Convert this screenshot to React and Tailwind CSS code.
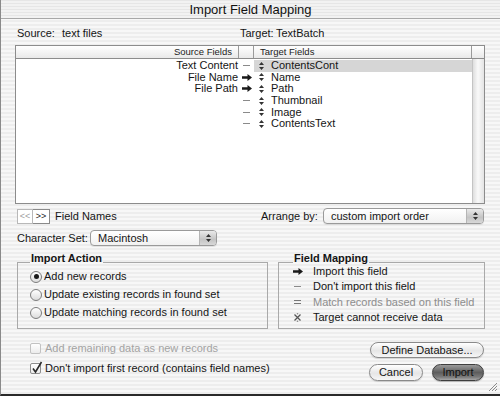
import React from "react";

const UpDown = ({ c = "#222" }) => (
  <svg width="5" height="8" viewBox="0 0 5 8">
    <path d="M2.5 0L5 3H0z M2.5 8L0 5h5z" fill={c} />
  </svg>
);

const Arrow = () => (
  <svg width="10" height="7" viewBox="0 0 10 7">
    <path d="M0 2.3h5.5V0L10 3.5 5.5 7V4.7H0z" fill="#1a1a1a" />
  </svg>
);

const Dash = () => <span className="block w-[7px] h-px bg-[#8a8a8a]" />;

const rows = [
  { s: "Text Content", m: "dash", t: "ContentsCont", sel: true },
  { s: "File Name", m: "arrow", t: "Name" },
  { s: "File Path", m: "arrow", t: "Path" },
  { s: "", m: "dash", t: "Thumbnail" },
  { s: "", m: "dash", t: "Image" },
  { s: "", m: "dash", t: "ContentsText" },
];

function Popup({ label, w }) {
  return (
    <div
      className={`${w} h-[16px] flex rounded-[4px] border border-[#9a9a9a] bg-[linear-gradient(to_bottom,#ffffff,#f1f1f1)] shadow-[0_1px_0_rgba(0,0,0,0.08)]`}
    >
      <div className="flex-1 flex items-center pl-[7px]">{label}</div>
      <div className="w-[17px] flex items-center justify-center rounded-r-[3px] border-l border-[#b5b5b5] bg-[linear-gradient(to_bottom,#e9e9e9,#c4c4c4_60%,#d8d8d8)]">
        <UpDown c="#333" />
      </div>
    </div>
  );
}

function Radio({ on, label }) {
  return (
    <div className="h-[15px] flex items-center">
      <span className="w-[12px] h-[12px] rounded-full border border-[#7d7d7d] bg-[linear-gradient(to_bottom,#ffffff,#dcdcdc)] flex items-center justify-center">
        {on && <span className="w-[5px] h-[5px] rounded-full bg-[#1a1a1a]" />}
      </span>
      <span className="ml-[2px]">{label}</span>
    </div>
  );
}

function Check({ on, disabled, label }) {
  return (
    <div className="h-[14px] flex items-center">
      <span
        className={`relative w-[11px] h-[11px] rounded-[2px] border bg-[linear-gradient(to_bottom,#ffffff,#ececec)] ${
          disabled ? "border-[#c2c2c2]" : "border-[#8d8d8d]"
        }`}
      >
        {on && (
          <svg
            className="absolute left-[1px] -top-[3px]"
            width="11"
            height="13"
            viewBox="0 0 11 13"
          >
            <path
              d="M1 7.5l2.5 3.5L9.5 1"
              fill="none"
              stroke="#2a2a2a"
              strokeWidth="1.6"
            />
          </svg>
        )}
      </span>
      <span className={`ml-[4px] ${disabled ? "text-[#a3a3a3]" : ""}`}>
        {label}
      </span>
    </div>
  );
}

const stripe =
  "bg-[repeating-linear-gradient(to_bottom,#ededed_0px,#ededed_2px,#f7f7f7_2px,#f7f7f7_4px)]";

export default function App() {
  return (
    <div
      className={`w-[500px] h-[396px] overflow-hidden relative flex flex-col border-l border-[#8a8a8a] border-b-2 border-b-[#2a2a2a] ${stripe} font-['Liberation_Sans',Arial,sans-serif] text-[11px] text-[#151515] leading-none`}
    >
      {/* title bar */}
      <div className="h-[19px] shrink-0 flex items-center justify-center border-b border-[#a8a8a8] text-[13px] text-[#111] bg-[repeating-linear-gradient(to_bottom,#e6e6e6_0px,#e6e6e6_1px,#f2f2f2_1px,#f2f2f2_3px)]">
        Import Field Mapping
      </div>

      <div className="pl-[14px] pr-[14px] flex flex-col">
        {/* source / target */}
        <div className="mt-[7px] h-[14px] flex items-center">
          <span className="ml-[2px] w-[45px]">Source:</span>
          <span className="w-[178px]">text files</span>
          <span className="w-[36px]">Target:</span>
          <span>TextBatch</span>
        </div>

        {/* table */}
        <div className="mt-[5px] w-[470px] h-[159px] border border-[#8c8c8c] flex flex-col bg-white">
          <div className="h-[13px] shrink-0 flex border-b border-[#8c8c8c] text-[9.5px] text-[#222] bg-[linear-gradient(to_bottom,#ffffff,#e9e9e9)]">
            <div className="w-[223px] flex items-center justify-end pr-[6px] border-r border-[#9a9a9a]">
              Source Fields
            </div>
            <div className="w-[15px] border-r border-[#9a9a9a]" />
            <div className="w-[218px] flex items-center pl-[6px] border-r border-[#9a9a9a]">
              Target Fields
            </div>
            <div className="w-[12px]" />
          </div>
          <div className="flex-1 flex">
            <div className="w-[456px] flex flex-col pt-[1px]">
              {rows.map((r, i) => (
                <div key={i} className="h-[11.6px] flex items-center">
                  <div className="w-[223px] text-right pr-[1px]">{r.s}</div>
                  <div className="w-[15px] flex items-center justify-center">
                    {r.m === "arrow" ? <Arrow /> : <Dash />}
                  </div>
                  <div
                    className={`w-[218px] h-full flex items-center pl-[5px] ${
                      r.sel ? "bg-[#d6d6d6]" : ""
                    }`}
                  >
                    <UpDown c="#333" />
                    <span className="ml-[7px]">{r.t}</span>
                  </div>
                </div>
              ))}
            </div>
            <div className="w-[12px] border-l border-[#c4c4c4] bg-[linear-gradient(to_right,#dedede,#f9f9f9_45%,#e4e4e4)]" />
          </div>
        </div>

        {/* nav + arrange */}
        <div className="mt-[4px] h-[16px] flex items-center">
          <div className="ml-[2px] flex">
            <span className="w-[16px] h-[15px] flex items-center justify-center border border-[#b8b8b8] bg-white text-[9px] text-[#a0a0a0]">
              &lt;&lt;
            </span>
            <span className="w-[17px] h-[15px] flex items-center justify-center border border-l-0 border-[#8a8a8a] bg-white text-[9px] text-[#222]">
              &gt;&gt;
            </span>
          </div>
          <span className="ml-[5px]">Field Names</span>
          <div className="ml-auto w-[225px] flex items-center">
            <span className="w-[62px]">Arrange by:</span>
            <Popup label="custom import order" w="w-[161px]" />
          </div>
        </div>

        {/* character set */}
        <div className="mt-[6px] h-[16px] ml-[2px] flex items-center">
          <span className="w-[73px]">Character Set:</span>
          <Popup label="Macintosh" w="w-[127px]" />
        </div>

        {/* groups */}
        <div className="mt-[6px] flex">
          <fieldset className="ml-[2px] w-[251px] h-[77px] border border-[#a9a9a9] px-[12px]">
            <legend className="font-bold leading-[12px] pb-[8px] px-[1px]">
              Import Action
            </legend>
            <div className="-mt-[3px] flex flex-col gap-[3px]">
              <Radio on label="Add new records" />
              <Radio label="Update existing records in found set" />
              <Radio label="Update matching records in found set" />
            </div>
          </fieldset>
          <fieldset className="ml-[10px] w-[207px] h-[77px] border border-[#a9a9a9] pl-[14px]">
            <legend className="font-bold leading-[12px] pb-[8px] px-[1px]">
              Field Mapping
            </legend>
            <div className="-mt-[8px] flex flex-col">
              <div className="h-[15.3px] flex items-center">
                <span className="w-[20px] flex items-center">
                  <Arrow />
                </span>
                <span>Import this field</span>
              </div>
              <div className="h-[15.3px] flex items-center">
                <span className="w-[20px] flex items-center pl-[1px]">
                  <Dash />
                </span>
                <span>Don't import this field</span>
              </div>
              <div className="h-[15.3px] flex items-center text-[#8e8e8e]">
                <span className="w-[20px] flex flex-col gap-[2px] pl-[1px]">
                  <span className="block w-[7px] h-px bg-[#777]" />
                  <span className="block w-[7px] h-px bg-[#777]" />
                </span>
                <span>Match records based on this field</span>
              </div>
              <div className="h-[15.3px] flex items-center">
                <span className="w-[20px] flex items-center">
                  <svg width="9" height="9" viewBox="0 0 9 9">
                    <path
                      d="M1.5 1.5l6 6M7.5 1.5l-6 6"
                      stroke="#555"
                      strokeWidth="1.3"
                    />
                    <circle cx="4.5" cy="0.8" r="0.8" fill="#888" />
                    <circle cx="4.5" cy="8.2" r="0.8" fill="#888" />
                  </svg>
                </span>
                <span>Target cannot receive data</span>
              </div>
            </div>
          </fieldset>
        </div>

        {/* bottom */}
        <div className="flex items-start">
          <div className="ml-[15px] pt-[12px] flex flex-col gap-[6px]">
            <Check disabled label="Add remaining data as new records" />
            <Check on label="Don't import first record (contains field names)" />
          </div>
          <div className="ml-auto mr-[2px] pt-[13px] flex flex-col items-end">
            <div className="w-[114px] h-[16px] rounded-full border border-[#8a8a8a] bg-[linear-gradient(to_bottom,#ffffff,#e6e6e6_55%,#f6f6f6)] flex items-center justify-center shadow-[0_1px_1px_rgba(0,0,0,0.15)]">
              Define Database...
            </div>
            <div className="mt-[6px] flex">
              <div className="w-[54px] h-[17px] rounded-full border border-[#8a8a8a] bg-[linear-gradient(to_bottom,#ffffff,#e6e6e6_55%,#f6f6f6)] flex items-center justify-center shadow-[0_1px_1px_rgba(0,0,0,0.15)]">
                Cancel
              </div>
              <div className="ml-[9px] w-[52px] h-[17px] rounded-full border border-[#3e3e3e] bg-[linear-gradient(to_bottom,#9a9a9a,#5e5e5e_50%,#7a7a7a_80%,#a8a8a8)] flex items-center justify-center text-[#111] shadow-[0_1px_1px_rgba(0,0,0,0.25)]">
                Import
              </div>
            </div>
          </div>
        </div>
      </div>

      {/* resize grip */}
      <svg
        className="absolute right-[2px] bottom-[2px]"
        width="10"
        height="10"
        viewBox="0 0 10 10"
      >
        <path d="M9 1L1 9M9 4L4 9M9 7L7 9" stroke="#8a8a8a" strokeWidth="1" />
      </svg>
    </div>
  );
}
